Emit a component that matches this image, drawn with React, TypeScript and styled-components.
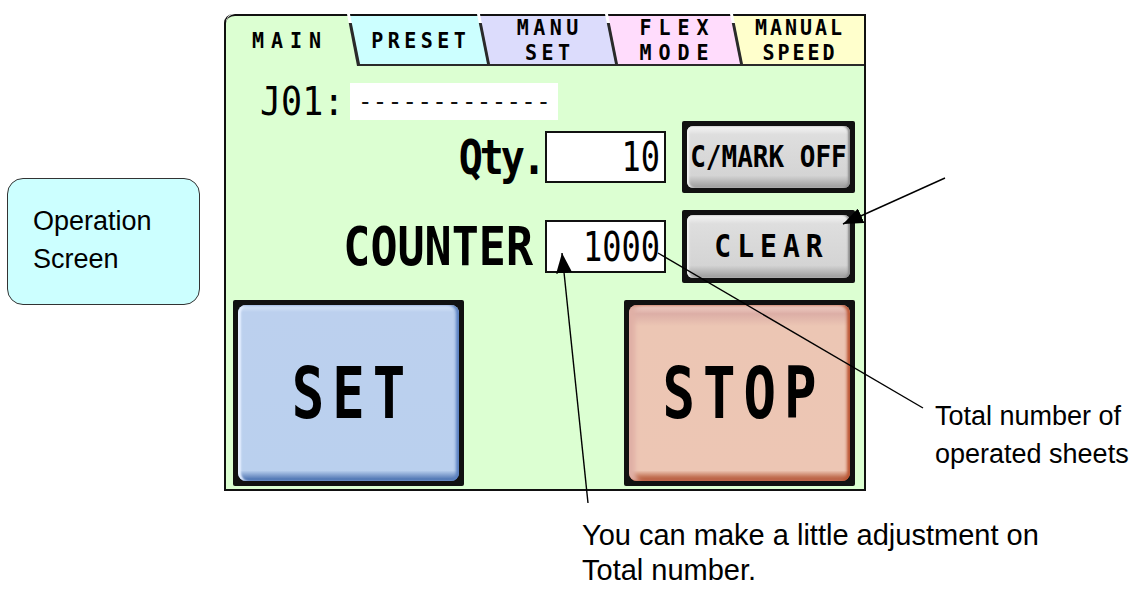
import { createGlobalStyle, styled } from 'styled-components';

const GlobalStyle = createGlobalStyle`
  html, body {
    margin: 0;
    padding: 0;
    background: #ffffff;
  }
  body {
    font-family: 'Liberation Sans', Arial, sans-serif;
    color: #000;
  }
`;

type TabInfo = { lines: string[]; color: string; width?: number; spacing: number };

const TABS: TabInfo[] = [
  { lines: ['MAIN'], color: '#dcffd2', width: 131, spacing: 7 },
  { lines: ['PRESET'], color: '#ccffff', width: 137, spacing: 4.5 },
  { lines: ['MANU', 'SET'], color: '#dcdcfc', width: 135, spacing: 4.5 },
  { lines: ['FLEX', 'MODE'], color: '#ffdcfc', width: 132, spacing: 7 },
  { lines: ['MANUAL', 'SPEED'], color: '#ffffcc', spacing: 3 },
];

function App() {
  return (
    <>
      <GlobalStyle />
      <StyledPage>
        <StyledTopRow>
          <StyledCallout>
            Operation
            <br />
            Screen
          </StyledCallout>

          <StyledPanel>
            <StyledTabBar>
              {TABS.map((tab, i) => (
                <StyledTab
                  key={tab.lines.join(' ')}
                  $color={tab.color}
                  $width={tab.width}
                  $first={i === 0}
                  $last={i === TABS.length - 1}
                  $active={i === 0}
                >
                  <StyledTabText $spacing={tab.spacing}>
                    {tab.lines.map((line) => (
                      <div key={line}>{line}</div>
                    ))}
                  </StyledTabText>
                </StyledTab>
              ))}
            </StyledTabBar>

            <StyledBody>
              <StyledJobRow>
                <StyledJobLabel>J01:</StyledJobLabel>
                <StyledJobField>-------------</StyledJobField>
              </StyledJobRow>

              <StyledControlRow $top={1} $height={72}>
                <StyledFieldLabel $size={40} $spacing={-3} $gap={2}>
                  Qty.
                </StyledFieldLabel>
                <StyledValueBox $height={52}>
                  <StyledValue>10</StyledValue>
                </StyledValueBox>
                <StyledFrameButton $height={72}>
                  <StyledGrayFace>
                    <StyledSmallCaption $size={26} $spacing={0}>
                      C/MARK OFF
                    </StyledSmallCaption>
                  </StyledGrayFace>
                </StyledFrameButton>
              </StyledControlRow>

              <StyledControlRow $top={17} $height={73}>
                <StyledFieldLabel $size={45} $spacing={0} $gap={12}>
                  COUNTER
                </StyledFieldLabel>
                <StyledValueBox $height={53}>
                  <StyledValue>1000</StyledValue>
                </StyledValueBox>
                <StyledFrameButton $height={73}>
                  <StyledGrayFace>
                    <StyledSmallCaption $size={28} $spacing={6}>
                      CLEAR
                    </StyledSmallCaption>
                  </StyledGrayFace>
                </StyledFrameButton>
              </StyledControlRow>

              <StyledBigRow>
                <StyledBigButton>
                  <StyledBigFace $tone="blue">
                    <StyledBigCaption>SET</StyledBigCaption>
                  </StyledBigFace>
                </StyledBigButton>
                <StyledBigButton>
                  <StyledBigFace $tone="red">
                    <StyledBigCaption>STOP</StyledBigCaption>
                  </StyledBigFace>
                </StyledBigButton>
              </StyledBigRow>
            </StyledBody>
          </StyledPanel>

          <StyledSideNote>
            Total number of
            <br />
            operated sheets
          </StyledSideNote>
        </StyledTopRow>

        <StyledBottomNote>
          You can make a little adjustment on
          <br />
          Total number.
        </StyledBottomNote>

        <StyledLeaders viewBox="0 0 1141 594" width={1141} height={594}>
          <defs>
            <marker
              id="head"
              viewBox="0 0 20 16"
              refX="20"
              refY="8"
              markerWidth="20"
              markerHeight="16"
              markerUnits="userSpaceOnUse"
              orient="auto"
            >
              <path d="M0 0 L20 8 L0 16 Z" fill="#000" />
            </marker>
          </defs>
          <line x1={945} y1={178} x2={843} y2={224} stroke="#000" strokeWidth={1.4} markerEnd="url(#head)" />
          <line x1={658} y1={253} x2={923} y2={408} stroke="#000" strokeWidth={1.4} />
          <line x1={588} y1={503} x2={562} y2={253} stroke="#000" strokeWidth={1.4} markerEnd="url(#head)" />
        </StyledLeaders>
      </StyledPage>
    </>
  );
}

export default App;

const SCREEN_FONT = `'DejaVu Sans Mono', 'Liberation Mono', monospace`;

const StyledPage = styled.div`
  position: relative;
  width: 1141px;
  height: 594px;
  overflow: hidden;
`;

const StyledTopRow = styled.div`
  display: flex;
  align-items: flex-start;
`;

const StyledCallout = styled.div`
  box-sizing: border-box;
  width: 193px;
  height: 127px;
  margin: 178px 0 0 7px;
  padding: 23px 0 0 25px;
  border: 1px solid #333;
  border-radius: 16px;
  background: #ccffff;
  font-size: 27px;
  line-height: 38px;
`;

const StyledPanel = styled.div`
  box-sizing: border-box;
  display: flex;
  flex-direction: column;
  width: 642px;
  height: 477px;
  margin: 14px 0 0 24px;
  border: 2px solid #111;
  border-top: none;
  border-top-left-radius: 9px;
  overflow: hidden;
`;

/* the dark background shows between the tabs as the slanted dividers;
   its white top band gives the little notch above each divider */
const StyledTabBar = styled.div`
  display: flex;
  align-items: flex-start;
  height: 52px;
  background: linear-gradient(180deg, #ffffff 0 9px, #2a2a2a 9px);
`;

const StyledTab = styled.div<{
  $color: string;
  $width?: number;
  $first: boolean;
  $last: boolean;
  $active: boolean;
}>`
  display: flex;
  align-items: center;
  justify-content: center;
  box-sizing: border-box;
  height: ${({ $active }) => ($active ? 52 : 50)}px;
  ${({ $width }) => ($width ? `width: ${$width}px; flex: none;` : 'flex: 1;')}
  margin-left: ${({ $first }) => ($first ? 0 : -7)}px;
  padding: ${({ $first }) => ($first ? '0 10px 2px 0' : '0')};
  border-top: 2px solid #111;
  border-top-left-radius: ${({ $first }) => ($first ? 9 : 0)}px;
  background: ${({ $color }) => $color};
  clip-path: ${({ $first, $last }) =>
    $first
      ? 'polygon(0 0, calc(100% - 10px) 0, 100% 100%, 0 100%)'
      : $last
        ? 'polygon(0 0, 100% 0, 100% 100%, 10px 100%)'
        : 'polygon(0 0, calc(100% - 10px) 0, 100% 100%, 10px 100%)'};
`;

const StyledTabText = styled.div<{ $spacing: number }>`
  font-family: ${SCREEN_FONT};
  font-weight: 700;
  font-size: 20px;
  line-height: 23px;
  letter-spacing: ${({ $spacing }) => $spacing}px;
  text-indent: ${({ $spacing }) => $spacing}px;
  text-align: center;
  transform: scaleY(1.1);
`;

const StyledBody = styled.div`
  flex: 1;
  display: flex;
  flex-direction: column;
  padding: 17px 9px 3px 7px;
  background: #dcffd2;
`;

const StyledJobRow = styled.div`
  display: flex;
  align-items: center;
  height: 37px;
  padding-left: 27px;
`;

const StyledJobLabel = styled.span`
  display: inline-block;
  width: 90px;
  font-family: ${SCREEN_FONT};
  font-size: 35px;
  transform: scaleY(1.1);
`;

const StyledJobField = styled.div`
  display: flex;
  align-items: center;
  box-sizing: border-box;
  width: 208px;
  height: 37px;
  padding-left: 8px;
  background: #ffffff;
  font-family: ${SCREEN_FONT};
  font-size: 24px;
  letter-spacing: 0.4px;
  color: #111;
`;

const StyledControlRow = styled.div<{ $top: number; $height: number }>`
  display: flex;
  align-items: center;
  justify-content: flex-end;
  height: ${({ $height }) => $height}px;
  margin-top: ${({ $top }) => $top}px;
`;

const StyledFieldLabel = styled.span<{ $size: number; $spacing: number; $gap: number }>`
  display: inline-block;
  margin-right: ${({ $gap }) => $gap}px;
  font-family: ${SCREEN_FONT};
  font-weight: 700;
  font-size: ${({ $size }) => $size}px;
  letter-spacing: ${({ $spacing }) => $spacing}px;
  transform: scaleY(1.2);
`;

const StyledValueBox = styled.div<{ $height: number }>`
  display: flex;
  align-items: center;
  justify-content: flex-end;
  box-sizing: border-box;
  width: 121px;
  height: ${({ $height }) => $height}px;
  margin-right: 16px;
  padding-right: 4px;
  border: 2px solid #111;
  background: #ffffff;
`;

const StyledValue = styled.span`
  display: inline-block;
  font-family: ${SCREEN_FONT};
  font-size: 32px;
  transform: scaleY(1.3);
`;

const StyledFrameButton = styled.div<{ $height: number }>`
  box-sizing: border-box;
  width: 173px;
  height: ${({ $height }) => $height}px;
  padding: 5px;
  border-radius: 2px;
  background: #111;
`;

const StyledGrayFace = styled.div`
  display: flex;
  align-items: center;
  justify-content: center;
  height: 100%;
  border-radius: 6px;
  background: linear-gradient(180deg, #f6f6f6 0%, #dedede 14%, #d4d4d4 80%, #9a9a9a 100%);
  box-shadow: inset -2px 0 2px #8c8c8c, inset 2px 0 2px #f4f4f4;
`;

const StyledSmallCaption = styled.span<{ $size: number; $spacing: number }>`
  display: inline-block;
  font-family: ${SCREEN_FONT};
  font-weight: 700;
  font-size: ${({ $size }) => $size}px;
  letter-spacing: ${({ $spacing }) => $spacing}px;
  text-indent: ${({ $spacing }) => $spacing}px;
  transform: scaleY(1.15);
`;

const StyledBigRow = styled.div`
  display: flex;
  justify-content: space-between;
  margin-top: 17px;
`;

const StyledBigButton = styled.div`
  box-sizing: border-box;
  width: 231px;
  height: 186px;
  padding: 5px;
  border-radius: 2px;
  background: #111;
`;

const StyledBigFace = styled.div<{ $tone: 'blue' | 'red' }>`
  display: flex;
  align-items: center;
  justify-content: center;
  height: 100%;
  border-radius: 8px;
  background: ${({ $tone }) =>
    $tone === 'blue'
      ? 'linear-gradient(180deg, #dce8fa 0%, #bcd0ee 4%, #bad0ee 94%, #3c64a8 100%)'
      : 'linear-gradient(180deg, #f2d2c8 0%, #dcaea6 5%, #ecc6b4 12%, #edc6b4 94%, #a83e1a 100%)'};
  box-shadow: ${({ $tone }) =>
    $tone === 'blue'
      ? 'inset -3px 0 3px #5a80c0, inset 3px 0 2px #e6efff'
      : 'inset -3px 0 3px #bb5533, inset 6px 0 4px #e0b0a6'};
`;

const StyledBigCaption = styled.span`
  display: inline-block;
  font-family: ${SCREEN_FONT};
  font-weight: 700;
  font-size: 54px;
  letter-spacing: 8px;
  text-indent: 8px;
  transform: scaleY(1.33);
`;

const StyledSideNote = styled.div`
  margin: 397px 0 0 69px;
  font-size: 27px;
  line-height: 38px;
  white-space: nowrap;
`;

const StyledBottomNote = styled.div`
  margin-top: 27px;
  padding-left: 582px;
  font-size: 29px;
  line-height: 35px;
  white-space: nowrap;
`;

const StyledLeaders = styled.svg`
  position: absolute;
  top: 0;
  left: 0;
  pointer-events: none;
`;
